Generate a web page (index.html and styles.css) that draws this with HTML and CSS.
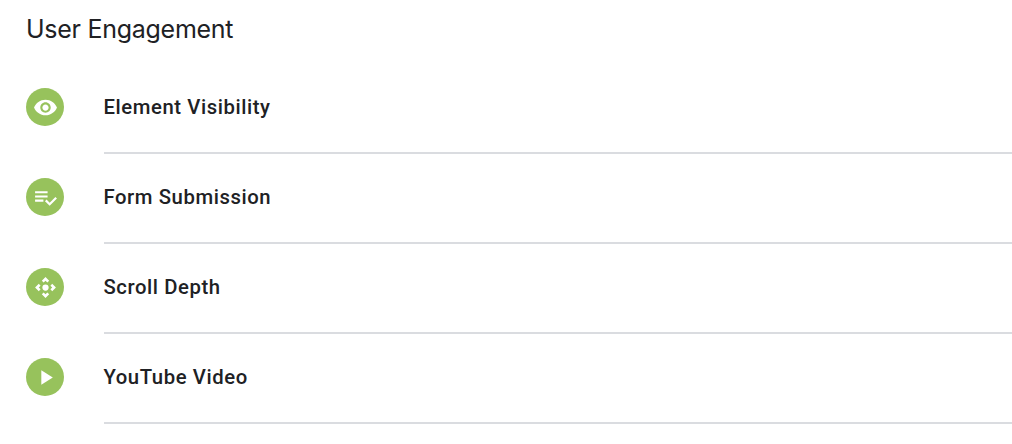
FILE: index.html
```html
<!DOCTYPE html>
<html lang="en">
<head>
<meta charset="utf-8">
<title>User Engagement</title>
<link rel="stylesheet" href="styles.css">
</head>
<body>
<main class="panel">
<h1 class="title">User Engagement</h1>
<ul class="list">
<li class="item"><span class="icon"><svg viewBox="0 0 24 24"><path d="M12 4.5C7 4.5 2.73 7.61 1 12c1.73 4.39 6 7.5 11 7.5s9.27-3.11 11-7.5c-1.73-4.39-6-7.5-11-7.5zM12 17c-2.76 0-5-2.24-5-5s2.24-5 5-5 5 2.24 5 5-2.24 5-5 5zm0-8c-1.66 0-3 1.34-3 3s1.34 3 3 3 3-1.34 3-3-1.34-3-3-3z"/></svg></span><span class="label">Element Visibility</span></li>
<li class="item"><span class="icon"><svg viewBox="0 0 24 24"><path d="M14 10H2v2h12v-2zm0-4H2v2h12V6zM2 16h8v-2H2v2zm19.5-4.5L23 13l-6.990 7-4.510-4.500L13 14l3.010 3 5.490-5.500z"/></svg></span><span class="label">Form Submission</span></li>
<li class="item"><span class="icon"><svg viewBox="0 0 24 24"><circle cx="12" cy="12" r="3"/><path d="M15.54 5.54L13.77 7.3 12 5.54 10.23 7.3 8.46 5.54 12 2zM18.46 15.54l-1.76-1.77L18.46 12l-1.76-1.77 1.76-1.77L22 12zM8.46 18.46l1.77-1.76L12 18.46l1.770-1.76 1.770 1.760L12 22zM5.54 8.46l1.760 1.770L5.540 12l1.760 1.770-1.760 1.770L2 12z"/></svg></span><span class="label">Scroll Depth</span></li>
<li class="item"><span class="icon"><svg viewBox="0 0 24 24"><path d="M8 5v14l11-7z"/></svg></span><span class="label">YouTube Video</span></li>
</ul>
</main>
</body>
</html>
```
FILE: styles.css
```css
body { margin: 0; background: #fff; color: #202124; }
.panel { padding-left: 26px; height: 444px; overflow: hidden; }
.title { margin: 0; height: 64px; padding-top: 13px; box-sizing: border-box; font: 400 25px/32px Inter, sans-serif; letter-spacing: -.27px; }
.list { list-style: none; margin: 0; padding: 0; }
.item { display: flex; align-items: flex-start; height: 90px; }
.icon { display: flex; align-items: center; justify-content: center; box-sizing: border-box; width: 38px; height: 38px; margin-top: 24px; margin-right: 40px; padding-left: 1px; border-radius: 50%; background: #97c25c; flex: none; }
.icon svg { width: 25px; height: 25px; fill: #fff; flex: none; }
.label { flex: 1; box-sizing: border-box; height: 90px; padding-top: 28px; border-bottom: 2px solid #dadce0; font: 500 20.3px/30px Roboto, sans-serif; letter-spacing: .59px; text-indent: -.6px; }
```
